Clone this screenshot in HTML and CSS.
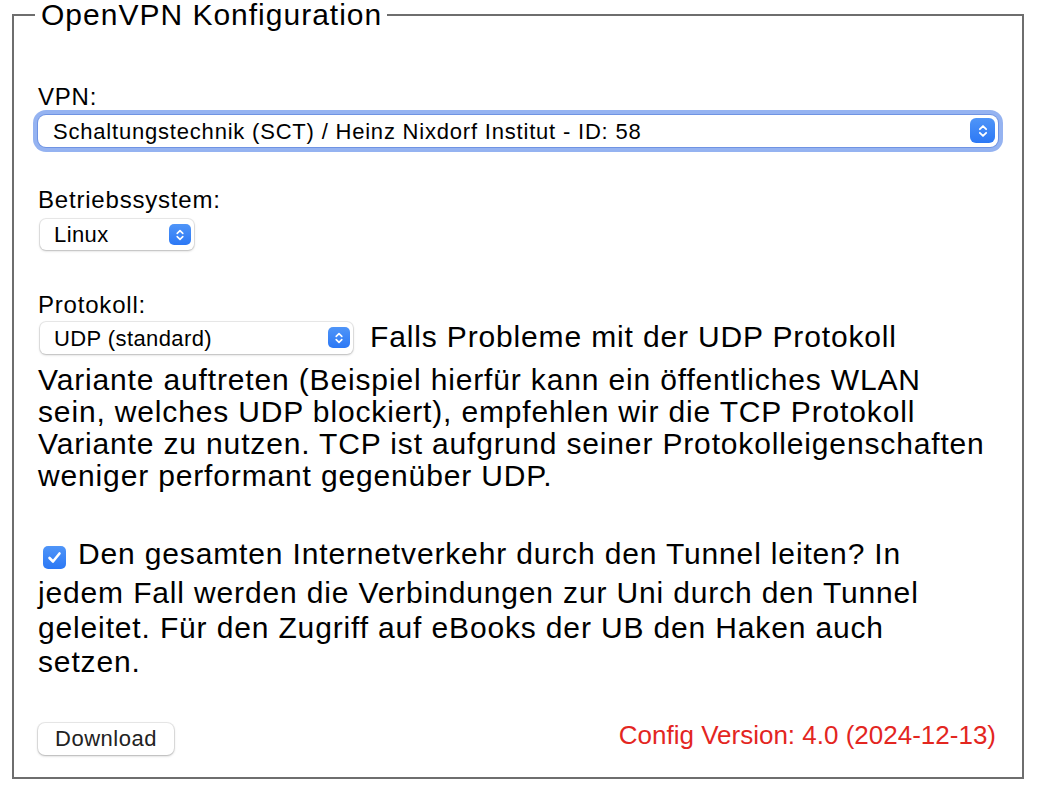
FILE: index.html
```html
<!DOCTYPE html>
<html lang="de">
<head>
<meta charset="utf-8">
<title>OpenVPN Konfiguration</title>
<link rel="stylesheet" href="styles.css">
</head>
<body>
<fieldset class="box">
  <legend class="legend">OpenVPN Konfiguration</legend>

  <div class="field field-vpn">
    <label class="label" for="vpn">VPN:</label>
    <div class="select-wrap select-wide focused">
      <select id="vpn" class="select">
        <option>Schaltungstechnik (SCT) / Heinz Nixdorf Institut - ID: 58</option>
      </select>
      <span class="arrows"><svg viewBox="0 0 20 20" width="16" height="16"><path d="M6.5 8 L10 4.5 L13.5 8 M6.5 12 L10 15.5 L13.5 12" fill="none" stroke="#fff" stroke-width="2" stroke-linecap="round" stroke-linejoin="round"/></svg></span>
    </div>
  </div>

  <div class="field field-os">
    <label class="label" for="os">Betriebssystem:</label>
    <div class="select-wrap select-os">
      <select id="os" class="select">
        <option>Linux</option>
      </select>
      <span class="arrows"><svg viewBox="0 0 20 20" width="16" height="16"><path d="M6.5 8 L10 4.5 L13.5 8 M6.5 12 L10 15.5 L13.5 12" fill="none" stroke="#fff" stroke-width="2" stroke-linecap="round" stroke-linejoin="round"/></svg></span>
    </div>
  </div>

  <div class="field field-proto">
    <label class="label" for="proto">Protokoll:</label>
    <p class="text proto-text"><span class="select-wrap select-proto"><select id="proto" class="select"><option>UDP (standard)</option></select><span class="arrows"><svg viewBox="0 0 20 20" width="16" height="16"><path d="M6.5 8 L10 4.5 L13.5 8 M6.5 12 L10 15.5 L13.5 12" fill="none" stroke="#fff" stroke-width="2" stroke-linecap="round" stroke-linejoin="round"/></svg></span></span>Falls Probleme mit der UDP Protokoll Variante auftreten (Beispiel hierfür kann ein öffentliches WLAN sein, welches UDP blockiert), empfehlen wir die TCP Protokoll Variante zu nutzen. TCP ist aufgrund seiner Protokolleigenschaften weniger performant gegenüber UDP.</p>
  </div>

  <p class="text check-text"><span class="checkbox"><svg viewBox="0 0 23 23" width="23" height="23"><path d="M6.5 12 L10 15.5 L16.5 7.5" fill="none" stroke="#fff" stroke-width="2.6" stroke-linecap="round" stroke-linejoin="round"/></svg></span>Den gesamten Internetverkehr durch den Tunnel leiten? In jedem Fall werden die Verbindungen zur Uni durch den Tunnel geleitet. Für den Zugriff auf eBooks der UB den Haken auch setzen.</p>

  <div class="footer">
    <button class="button" type="button">Download</button>
    <span class="version">Config Version: 4.0 (2024-12-13)</span>
  </div>
</fieldset>
</body>
</html>
```

FILE: styles.css
```css
html, body {
  margin: 0;
  padding: 0;
  background: #fff;
}
body {
  font-family: "Liberation Sans", Arial, sans-serif;
  color: #000;
  width: 1040px;
  height: 794px;
  overflow: hidden;
}
.box {
  margin: 0 0 0 12px;
  width: 1012px;
  height: 779px;
  box-sizing: border-box;
  border: 2px solid #6e6e6e;
  padding: 53px 24px 0 24px;
  min-width: 0;
}
.legend {
  font-size: 30px;
  letter-spacing: 1px;
  line-height: 30px;
  padding: 0 5px 0 6px;
  margin-left: -3px;
}
.field {
  display: flex;
  flex-direction: column;
  align-items: flex-start;
}
.label {
  font-size: 24px;
  line-height: 28px;
  height: 28px;
  letter-spacing: 0.8px;
}
.select-wrap {
  position: relative;
  display: inline-block;
  vertical-align: middle;
}
.select {
  appearance: none;
  -webkit-appearance: none;
  font-family: "Liberation Sans", Arial, sans-serif;
  font-size: 22px;
  letter-spacing: 0.4px;
  color: #000;
  background: #fff;
  border: none;
  border-radius: 6px;
  box-shadow: 0 0 0 1px rgba(0,0,0,0.08), 0 1px 2.5px rgba(0,0,0,0.22);
  height: 31px;
  padding: 0 0 0 14px;
  margin: 0;
  outline: none;
  display: block;
}
.arrows {
  position: absolute;
  right: 3px;
  top: 5px;
  width: 22px;
  height: 21px;
  border-radius: 5px;
  background: linear-gradient(#4f95f8, #2c78f5);
  display: flex;
  align-items: center;
  justify-content: center;
}
.arrows svg { display: block; }
.select-wide { margin-top: 4px; align-self: stretch; }
.select-wide .select {
  width: 100%;
  height: 32px;
  letter-spacing: 0.8px;
  padding-left: 15px;
}
.select-wide .arrows {
  width: 25px;
  height: 25px;
  top: 3px;
  right: 3px;
  border-radius: 6px;
}
.select-wide .arrows svg { width: 18px; height: 18px; }
.focused .select {
  box-shadow: 0 0 0 1px rgba(40,90,200,0.35), 0 0 0 5px #95b3f1;
  border-radius: 8px;
}
.field-os { margin-top: 39px; }
.select-os { margin-top: 5px; margin-left: 2px; }
.select-os .select { width: 154px; }
.field-proto { margin-top: 41px; }
.select-proto {
  margin: 8px 17px 10px 2px;
}
.select-proto .select { width: 313px; height: 32px; }
.text {
  font-size: 30px;
  letter-spacing: 0.85px;
  line-height: 32px;
  margin: 0 6px 0 0;
}
.proto-text { margin-top: -5px; }
.check-text {
  margin-top: 45px;
  line-height: 34.5px;
}
.checkbox {
  display: inline-block;
  width: 23px;
  height: 23px;
  border-radius: 5px;
  background: linear-gradient(#4f95f8, #2c78f5);
  vertical-align: -12px;
  margin: 0 12px 7px 5px;
}
.checkbox svg { display: block; }
.footer {
  display: flex;
  justify-content: space-between;
  align-items: center;
  margin-top: 40px;
}
.button {
  font-family: "Liberation Sans", Arial, sans-serif;
  font-size: 22px;
  letter-spacing: 0.5px;
  color: #222;
  background: #fff;
  border: none;
  border-radius: 7px;
  box-shadow: 0 0 0 1px rgba(0,0,0,0.08), 0 1px 2.5px rgba(0,0,0,0.25);
  height: 32px;
  width: 136px;
  padding: 0;
  margin-left: 0;
}
.version {
  color: #e3261f;
  font-size: 26px;
  margin: 0 2px 8px 0;
}
```
